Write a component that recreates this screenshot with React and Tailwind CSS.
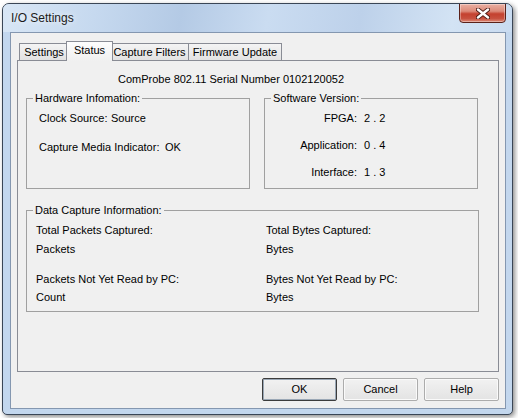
import React from 'react';

const GroupBox = ({ title, className, children }) => (
  <fieldset className={`border border-[#a0a0a0] ${className}`}>
    <legend className="ml-[6px] px-[2px] leading-[13px]">{title}</legend>
    {children}
  </fieldset>
);

const Tab = ({ label, selected, className }) =>
  selected ? (
    <div className={`relative z-20 h-[20px] -mb-px flex items-start justify-center pt-[2px] border border-b-0 border-[#898c95] bg-gradient-to-b from-[#fdfdfd] to-[#f0f0f0] ${className}`}>
      {label}
    </div>
  ) : (
    <div className={`relative z-10 h-[17px] flex items-start justify-center pt-[2px] border border-b-0 border-[#898c95] bg-gradient-to-b from-[#f4f4f4] to-[#e2e2e2] ${className}`}>
      {label}
    </div>
  );

const Button = ({ label, primary }) => (
  <button
    className={`w-[75px] h-[23px] flex items-center justify-center rounded-[2px] bg-gradient-to-b from-[#f2f2f2] to-[#e3e3e3] ${
      primary
        ? 'border border-[#3c3c3c] shadow-[inset_0_0_0_1px_#9aa7b5]'
        : 'border border-[#acacac] shadow-[inset_0_0_0_1px_#fafafa]'
    }`}
  >
    {label}
  </button>
);

const App = () => {
  return (
    <div className="w-[518px] h-[418px] bg-white overflow-hidden text-[11px] leading-[13px] text-black font-['Liberation_Sans',Arial,sans-serif]">
      <div className="ml-[2px] mt-[3px] w-[511px] h-[412px] flex flex-col rounded-t-[7px] rounded-b-[5px] border border-[#3a4656] bg-[#c3d7ee] shadow-[2px_2px_5px_rgba(0,0,0,0.45)] overflow-hidden">
        {/* Title bar */}
        <div className="h-[28px] flex items-center bg-[linear-gradient(100deg,#d8e6f5_0%,#c6d9ef_18%,#b4cae5_35%,#cadcf1_52%,#bdd1ea_70%,#d3e3f4_88%,#c9dbf0_100%)]">
          <span className="pl-[8px] text-[12px] leading-[15px] text-[#1b1b1b] [text-shadow:0_0_6px_#ffffff]">
            I/O Settings
          </span>
          <div className="flex-1" />
          <div className="self-start -mt-px mr-[6px] w-[47px] h-[20px] flex items-center justify-center rounded-b-[4px] border border-[#5a2119] bg-[linear-gradient(180deg,#eab0a3_0%,#dc8a79_40%,#c4412f_55%,#c7503e_80%,#de8b78_100%)] shadow-[inset_0_0_0_1px_rgba(255,255,255,0.35)]">
            <svg width="14" height="11" viewBox="0 0 14 11">
              <path d="M2 1.5 L12 9.5 M12 1.5 L2 9.5" stroke="#4a1a14" strokeWidth="4.2" strokeLinecap="round" />
              <path d="M2 1.5 L12 9.5 M12 1.5 L2 9.5" stroke="#ffffff" strokeWidth="2.4" strokeLinecap="round" />
            </svg>
          </div>
        </div>

        {/* Client area */}
        <div className="ml-[7px] mr-[6px] mb-[5px] flex-1 flex flex-col border border-[#8497b0] bg-[#f0f0f0]">
          <div className="ml-[6px] mt-[8px] w-[482px]">
            {/* Tabs */}
            <div className="h-[19px] flex items-end pl-[2px]">
              <Tab label="Settings" className="w-[50px]" />
              <Tab label="Status" selected className="w-[47px] -ml-[3px]" />
              <Tab label="Capture Filters" className="w-[79px] -ml-[3px]" />
              <Tab label="Firmware Update" className="w-[94px] -ml-px" />
            </div>

            {/* Panel */}
            <div className="relative z-0 h-[312px] border border-[#898c95] bg-[#f0f0f0]">
              <div className="ml-[100px] mt-[12px]">
                ComProbe 802.11 Serial Number 0102120052
              </div>

              <div className="flex ml-[8px] mt-[6px] gap-[14px]">
                <GroupBox title="Hardware Infomation:" className="w-[224px] h-[97px]">
                  <div className="pl-[12px] pt-[7px]">
                    <div className="flex">
                      <span className="w-[72px]">Clock Source:</span>
                      <span>Source</span>
                    </div>
                    <div className="flex mt-[16px]">
                      <span className="w-[126px]">Capture Media Indicator:</span>
                      <span>OK</span>
                    </div>
                  </div>
                </GroupBox>
                <GroupBox title="Software Version:" className="w-[214px] h-[97px]">
                  <div className="pt-[7px] flex flex-col gap-[14px]">
                    <div className="flex">
                      <span className="w-[92px] text-right">FPGA:</span>
                      <span className="pl-[7px]">2 . 2</span>
                    </div>
                    <div className="flex">
                      <span className="w-[92px] text-right">Application:</span>
                      <span className="pl-[7px]">0 . 4</span>
                    </div>
                    <div className="flex">
                      <span className="w-[92px] text-right">Interface:</span>
                      <span className="pl-[7px]">1 . 3</span>
                    </div>
                  </div>
                </GroupBox>
              </div>

              <GroupBox title="Data Capture Information:" className="ml-[8px] mt-[15px] w-[453px] h-[108px]">
                <div className="grid grid-cols-[230px_1fr] pl-[9px] pt-[7px]">
                  <div>Total Packets Captured:</div>
                  <div>Total Bytes Captured:</div>
                  <div className="mt-[6px]">Packets</div>
                  <div className="mt-[6px]">Bytes</div>
                  <div className="mt-[17px]">Packets Not Yet Read by PC:</div>
                  <div className="mt-[17px]">Bytes Not Yet Read by PC:</div>
                  <div className="mt-[5px]">Count</div>
                  <div className="mt-[5px]">Bytes</div>
                </div>
              </GroupBox>
            </div>
          </div>

          {/* Buttons */}
          <div className="flex justify-end gap-[6px] pr-[6px] mt-[6px]">
            <Button label="OK" primary />
            <Button label="Cancel" />
            <Button label="Help" />
          </div>
        </div>
      </div>
    </div>
  );
};

export default App;
